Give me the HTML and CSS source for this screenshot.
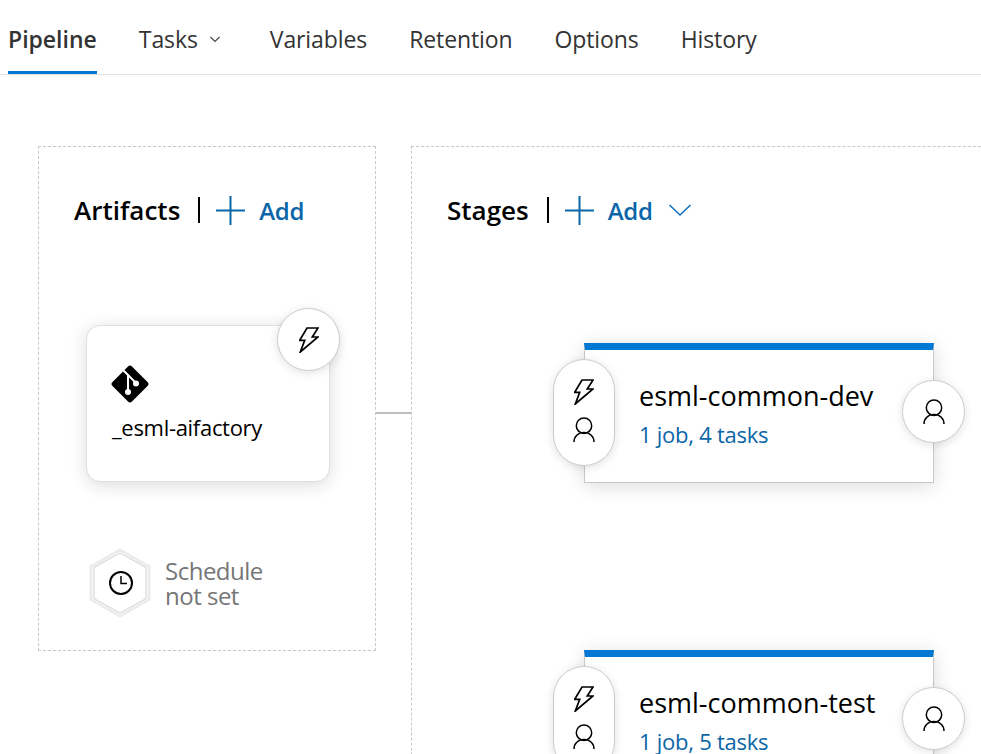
FILE: index.html
```html
<!DOCTYPE html>
<html lang="en">
  <head>
    <meta charset="UTF-8" />
    <meta name="viewport" content="width=device-width, initial-scale=1.0" />
    <title>Pipeline</title>
    <link rel="stylesheet" href="styles.css">
  </head>
  <body>
    <svg class="defs" width="0" height="0" aria-hidden="true">
      <symbol id="bolt" viewBox="0 0 20 26">
        <path d="M8 1h11l-5.700 9H19L1.300 25l4.400-11.700H.7z" fill="#fff" stroke="#000" stroke-width="1.700" stroke-linejoin="miter" />
      </symbol>
      <symbol id="person" viewBox="0 0 22 25">
        <circle cx="11" cy="8.700" r="7.700" fill="none" stroke="#000" stroke-width="1.500" />
        <path d="M1 25c0-5.500 4-9.500 10-9.500s10 4 10 9.500" fill="none" stroke="#000" stroke-width="1.500" />
      </symbol>
      <symbol id="plus" viewBox="0 0 29 29">
        <path d="M14.500 0v29M0 14.500h29" fill="none" stroke="currentColor" stroke-width="2" />
      </symbol>
    </svg>

    <header class="tabs">
      <a class="tab active" href="#">Pipeline</a>
      <a class="tab tab-tasks" href="#">Tasks
        <svg class="tab-chevron" width="12" height="7" viewBox="0 0 12 7"><path d="M1.500 1l4.500 4.500L10.500 1" fill="none" stroke="#444" stroke-width="1.100" /></svg>
      </a>
      <a class="tab" href="#">Variables</a>
      <a class="tab" href="#">Retention</a>
      <a class="tab" href="#">Options</a>
      <a class="tab" href="#">History</a>
    </header>

    <main class="canvas">
      <!-- Artifacts -->
      <section class="panel artifacts">
        <div class="panel-head">
          <h2>Artifacts</h2>
          <span class="divider"></span>
          <a class="add" href="#"><svg class="plus"><use href="#plus" /></svg>Add</a>
        </div>

        <div class="artifact-card">
          <svg class="git-icon" width="38" height="38" viewBox="0 0 38 38">
            <path d="M17 1.500 1.500 17a2.800 2.800 0 0 0 0 4L17 36.500a2.800 2.800 0 0 0 4 0L36.500 21a2.800 2.800 0 0 0 0-4L21 1.500a2.800 2.800 0 0 0-4 0z" fill="#000" />
            <path d="M12.500 5.500 24 17M17 10v16" fill="none" stroke="#fff" stroke-width="2" />
            <circle cx="17" cy="27" r="3" fill="#fff" />
            <circle cx="25" cy="18.500" r="3" fill="#fff" />
          </svg>
          <div class="artifact-name">_esml-aifactory</div>
          <div class="badge artifact-badge"><svg class="bolt"><use href="#bolt" /></svg></div>
        </div>

        <div class="schedule">
          <svg width="62" height="70" viewBox="0 0 62 70">
            <path d="M31 2 60 18.500v33L31 68 2 51.500v-33z" fill="#fff" stroke="#ececec" stroke-width="3" />
            <path d="M31 5 57 19.500v31L31 65 5 50.500v-31z" fill="#fff" stroke="#d0d0d0" stroke-width="1" />
            <circle cx="32" cy="35" r="11" fill="none" stroke="#000" stroke-width="2" />
            <path d="M32 28v7.500h6" fill="none" stroke="#000" stroke-width="1.500" />
          </svg>
          <div class="schedule-text">Schedule<br />not set</div>
        </div>
      </section>

      <div class="connector"></div>

      <!-- Stages -->
      <section class="panel stages">
        <div class="panel-head">
          <h2>Stages</h2>
          <span class="divider"></span>
          <a class="add" href="#"><svg class="plus"><use href="#plus" /></svg>Add</a>
          <svg class="add-chevron" width="24" height="14" viewBox="0 0 24 14"><path d="M1.500 2 12 12 22.500 2" fill="none" stroke="#106ebe" stroke-width="1.500" /></svg>
        </div>

        <div class="stage-card">
          <div class="stage-pill">
            <svg class="bolt"><use href="#bolt" /></svg>
            <svg class="person"><use href="#person" /></svg>
          </div>
          <div class="stage-name">esml-common-dev</div>
          <div class="stage-tasks">1 job, 4 tasks</div>
          <div class="badge stage-badge"><svg class="person"><use href="#person" /></svg></div>
        </div>

        <div class="stage-card">
          <div class="stage-pill">
            <svg class="bolt"><use href="#bolt" /></svg>
            <svg class="person"><use href="#person" /></svg>
          </div>
          <div class="stage-name">esml-common-test</div>
          <div class="stage-tasks">1 job, 5 tasks</div>
          <div class="badge stage-badge"><svg class="person"><use href="#person" /></svg></div>
        </div>
      </section>
    </main>
  </body>
</html>
```

FILE: styles.css
```css
html,
body {
  height: 100%;
  overflow: hidden;
}

body {
  margin: 0;
  background: #fff;
  font-family: "Open Sans", "Noto Sans", sans-serif;
  color: #000;
}

a {
  text-decoration: none;
}

.defs {
  position: absolute;
}

.tabs {
  display: flex;
  gap: 42px;
  height: 74px;
  padding-left: 8px;
  border-bottom: 1px solid #e0e0e0;
}

.tab {
  display: flex;
  align-items: center;
  box-sizing: border-box;
  height: 74px;
  padding-top: 7px;
  font-size: 23px;
  letter-spacing: -0.1px;
  color: #333;
  border-bottom: 3px solid transparent;
}

.tab.active {
  font-weight: 600;
  letter-spacing: 0;
  border-bottom-color: #0078d4;
}

.tab-tasks {
  gap: 11px;
  padding-right: 7px;
}

.canvas {
  display: flex;
  align-items: flex-start;
  padding: 71px 0 0 38px;
}

.panel {
  box-sizing: border-box;
  flex: none;
  border: 1px dashed #c8c8c8;
}

.artifacts {
  width: 338px;
  height: 505px;
  padding: 44px 0 0 35px;
}

.stages {
  width: 620px;
  height: 700px;
  padding: 44px 0 0 35px;
  border-right: 0;
}

.connector {
  flex: none;
  width: 35px;
  height: 2px;
  margin-top: 266px;
  background: #bdbdbd;
}

.panel-head {
  display: flex;
  align-items: center;
  height: 38px;
}

.panel-head h2 {
  margin: 0;
  font-size: 26px;
  font-weight: 600;
  letter-spacing: 0;
}

.divider {
  width: 2px;
  height: 26px;
  margin: 0 16px 0 18px;
  background: #000;
}

.add {
  display: flex;
  align-items: center;
  gap: 14px;
  font-size: 24px;
  font-weight: 600;
  letter-spacing: -0.3px;
  color: #0a66a8;
}

.plus {
  width: 29px;
  height: 29px;
  color: #0a66a8;
}

.add-chevron {
  margin-left: 15px;
}

.artifact-card {
  position: relative;
  box-sizing: border-box;
  width: 244px;
  height: 157px;
  margin: 96px 0 0 12px;
  padding: 39px 0 0 25px;
  border: 1px solid #e0e0e0;
  border-radius: 14px;
  box-shadow: 0 3px 18px rgba(0, 0, 0, 0.14);
  background: #fff;
}

.git-icon {
  display: block;
  margin-left: -1px;
}

.artifact-name {
  margin-top: 9px;
  font-size: 22px;
  line-height: 30px;
  letter-spacing: -0.3px;
}

.badge {
  position: absolute;
  display: flex;
  align-items: center;
  justify-content: center;
  box-sizing: border-box;
  width: 63px;
  height: 63px;
  border: 1px solid #ccc;
  border-radius: 50%;
  background: #fff;
  box-shadow: 0 2px 10px rgba(0, 0, 0, 0.12);
}

.artifact-badge {
  top: -18px;
  right: -11px;
}

.bolt {
  width: 20px;
  height: 26px;
}

.person {
  width: 22px;
  height: 25px;
}

.schedule {
  display: flex;
  align-items: center;
  gap: 14px;
  margin: 66px 0 0 15px;
}

.schedule-text {
  font-size: 24px;
  line-height: 25px;
  letter-spacing: -0.5px;
  color: #767676;
}

.stage-card {
  position: relative;
  box-sizing: border-box;
  width: 350px;
  height: 140px;
  margin: 114px 0 0 137px;
  padding: 28px 0 0 54px;
  border: 1px solid #c8c8c8;
  border-top: 7px solid #0078d4;
  box-shadow: 0 3px 18px rgba(0, 0, 0, 0.14);
  background: #fff;
}

.stage-card + .stage-card {
  margin-top: 167px;
}

.stage-pill {
  position: absolute;
  top: 9px;
  left: -32px;
  display: flex;
  flex-direction: column;
  align-items: center;
  gap: 12px;
  box-sizing: border-box;
  width: 62px;
  height: 107px;
  padding-top: 19px;
  border: 1px solid #ccc;
  border-radius: 31px;
  background: #fff;
  box-shadow: 0 2px 10px rgba(0, 0, 0, 0.12);
}

.stage-badge {
  top: 30px;
  right: -32px;
}

.stage-name {
  font-size: 27px;
  line-height: 36px;
  letter-spacing: 0;
}

.stage-tasks {
  margin-top: 5px;
  font-size: 22px;
  line-height: 30px;
  letter-spacing: -0.25px;
  color: #0a66a8;
}
```
